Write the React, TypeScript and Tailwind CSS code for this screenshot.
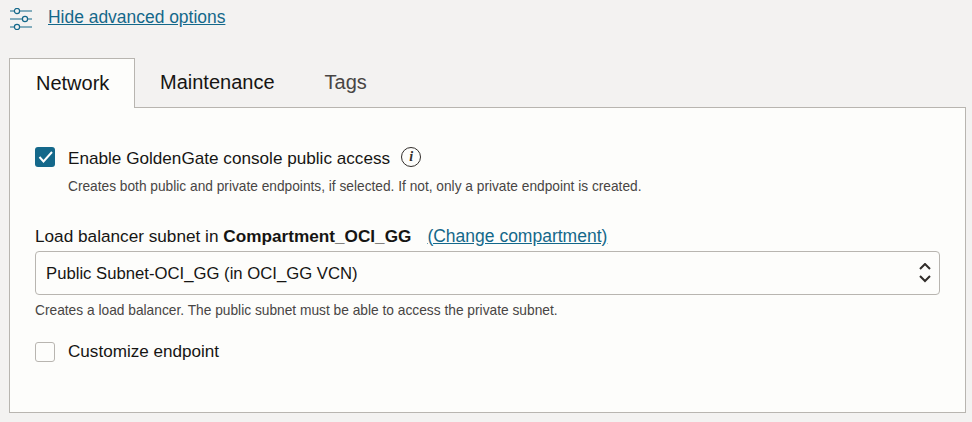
function Check({ on }: { on?: boolean }) {
  return on ? (
    <div className="w-5 h-5 rounded-[3px] bg-[#14688a] flex items-center justify-center shrink-0">
      <svg width="20" height="20" viewBox="0 0 20 20" fill="none" stroke="#fff" strokeWidth="2">
        <path d="M4.5 10 L8.5 14.5 L17 5" />
      </svg>
    </div>
  ) : (
    <div className="w-5 h-5 rounded-[3px] border border-[#b8b5b0] bg-[#fdfdfb] shrink-0" />
  );
}

export default function App() {
  return (
    <div className="w-[972px] h-[422px] bg-[#f3f2f1] overflow-hidden pl-[9px] font-['Liberation_Sans',Arial,sans-serif] text-[#161513]">
      <div className="h-[58px] flex items-start pt-[7px] gap-[15px] pl-px">
        <svg className="mt-px" width="23" height="22" viewBox="0 0 23 22" fill="none" stroke="#14688a" strokeWidth="1.2">
          <path d="M0 3H4M10 3H22M0 11H12M18 11H22M0 19H4M10 19H22" />
          <circle cx="7" cy="3" r="2.6" />
          <circle cx="15" cy="11" r="2.6" />
          <circle cx="7" cy="19" r="2.6" />
        </svg>
        <a className="text-[#14688a] underline text-[17.45px] leading-5">Hide advanced options</a>
      </div>
      <div className="flex h-[49px]">
        <div className="w-[126px] h-[50px] relative z-10 bg-[#fdfdfb] border border-b-0 border-[#b8b5b0] flex items-center pl-[26px] pb-[2px] text-[20px]">Network</div>
        <div className="h-[48px] flex items-center pl-[25px] text-[20px] text-[#161513]">Maintenance</div>
        <div className="h-[48px] flex items-center pl-[50px] text-[20px] text-[#484544]">Tags</div>
      </div>
      <div className="w-[957px] h-[306px] bg-[#fdfdfb] border border-[#b8b5b0] pl-[25px] pt-[39px]">
        <div className="flex items-center gap-[13px] h-5">
          <Check on />
          <span className="text-[17.15px] leading-5 pt-[2px]">Enable GoldenGate console public access</span>
          <span className="-ml-[2px] w-5 h-5 rounded-full border border-[#312d2a] flex items-center justify-center font-['Liberation_Serif',serif] italic font-bold text-[14px] leading-none text-[#312d2a]">i</span>
        </div>
        <div className="ml-[33px] mt-[12px] text-[13.72px] leading-4 text-[#484544]">Creates both public and private endpoints, if selected. If not, only a private endpoint is created.</div>
        <div className="mt-[30px] h-5 flex items-center pt-px text-[17.2px] leading-5">
          <span>Load balancer subnet in&nbsp;</span>
          <b className="font-bold">Compartment_OCI_GG</b>
          <a className="ml-[16px] text-[#14688a] underline text-[17.5px]">(Change compartment)</a>
        </div>
        <div className="mt-[6px] w-[905px] h-11 rounded-[4px] border border-[#b8b5b0] flex items-center justify-between pl-[10px] pr-[7px] text-[16.7px]">
          <span className="pt-px">Public Subnet-OCI_GG (in OCI_GG VCN)</span>
          <svg width="14" height="20" viewBox="0 0 14 20" fill="none" stroke="#312d2a" strokeWidth="2">
            <path d="M2 6 L7 1 L12 6 M2 13 L7 18 L12 13" />
          </svg>
        </div>
        <div className="mt-[8px] text-[13.76px] leading-4 text-[#484544]">Creates a load balancer. The public subnet must be able to access the private subnet.</div>
        <div className="mt-[23px] flex items-center gap-[13px] h-5">
          <Check />
          <span className="text-[17.1px]">Customize endpoint</span>
        </div>
      </div>
    </div>
  );
}
